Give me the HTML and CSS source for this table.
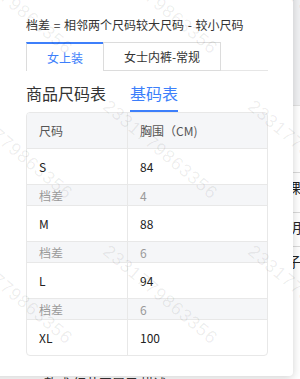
FILE: index.html
```html
<!DOCTYPE html>
<html lang="zh-CN">
<head>
<meta charset="utf-8">
<title>尺码表</title>
<link rel="stylesheet" href="styles.css">
</head>
<body>
<div class="page">
  <div class="page-head"></div>
  <div class="page-gap"></div>
  <div class="page-row"><span class="page-text">课程</span></div>
  <div class="page-row page-row-b"><span class="page-text">明细</span></div>
  <div class="page-row"><span class="page-text">子项</span></div>
  <div class="page-bottom"><span class="page-foot">款式 细节图展示 描述</span></div>
</div>

<div class="popover">
  <div class="note">档差 = 相邻两个尺码较大尺码 - 较小尺码</div>
  <div class="tabs">
    <div class="tab tab-active">女上装</div>
    <div class="tab">女士内裤-常规</div>
    <div class="tab-fill"></div>
  </div>
  <div class="subtabs">
    <div class="subtab">商品尺码表</div>
    <div class="subtab subtab-active">基码表</div>
  </div>
  <div class="size-table">
    <div class="cell head c1">尺码</div>
    <div class="cell head">胸围（CM)</div>

    <div class="cell c1">S</div>
    <div class="cell">84</div>
    <div class="cell diff c1">档差</div>
    <div class="cell diff">4</div>

    <div class="cell c1">M</div>
    <div class="cell">88</div>
    <div class="cell diff c1">档差</div>
    <div class="cell diff">6</div>

    <div class="cell c1">L</div>
    <div class="cell">94</div>
    <div class="cell diff c1">档差</div>
    <div class="cell diff">6</div>

    <div class="cell c1 last">XL</div>
    <div class="cell last">100</div>
  </div>
</div>

<div class="watermarks">
  <span class="wm wm-a1">2331779863356</span>
  <span class="wm wm-a2">2331779863356</span>
  <span class="wm wm-a3">2331779863356</span>
  <span class="wm wm-b1">2331779863356</span>
  <span class="wm wm-b2">2331779863356</span>
  <span class="wm wm-b3">2331779863356</span>
  <span class="wm wm-c1">2331779863356</span>
  <span class="wm wm-c2">2331779863356</span>
  <span class="wm wm-c3">2331779863356</span>
</div>
</body>
</html>
```

FILE: styles.css
```css
html, body {
  margin: 0;
  padding: 0;
}
body {
  width: 300px;
  height: 379px;
  overflow: hidden;
  position: relative;
  background: #ffffff;
  font-family: "Noto Sans CJK SC", "Noto Sans", sans-serif;
  color: #333333;
}

/* background page behind the popover */
.page {
  display: flex;
  flex-direction: column;
  height: 379px;
  overflow: hidden;
}
.page-head {
  height: 105px;
  flex-shrink: 0;
  background: #f0f1f3;
  border-bottom: 1px solid #e2e2e2;
}
.page-gap {
  height: 66px;
  flex-shrink: 0;
}
.page-row {
  height: 27px;
  flex-shrink: 0;
  border-top: 1px solid #d9d9d9;
  display: flex;
  align-items: center;
  padding-left: 287px;
  margin-bottom: 12px;
}
.page-row-b {
  margin-bottom: 6px;
}
.page-text {
  font-size: 14px;
  color: #222222;
  white-space: nowrap;
}
.page-bottom {
  margin-top: auto;
  flex-shrink: 0;
  height: 6px;
  padding-left: 44px;
  overflow: hidden;
}
.page-foot {
  display: block;
  margin-top: 3px;
  font-size: 13px;
  line-height: 14px;
  color: #333333;
  white-space: nowrap;
}

/* popover card */
.popover {
  position: absolute;
  left: -10px;
  top: -10px;
  width: 303px;
  height: 386px;
  box-sizing: border-box;
  padding: 26px 0 0 36px;
  background: #ffffff;
  border-radius: 4px;
  box-shadow: 0 2px 10px rgba(0, 0, 0, 0.18);
}
.note {
  font-size: 12px;
  line-height: 18px;
  color: #333333;
  white-space: nowrap;
  word-spacing: 1px;
}
.tabs {
  margin-top: 8px;
  width: 242px;
  display: flex;
  height: 29px;
}
.tab {
  box-sizing: border-box;
  height: 29px;
  width: 118px;
  border: 1px solid #dcdcdc;
  font-size: 12px;
  display: flex;
  align-items: center;
  justify-content: center;
  color: #333333;
}
.tab-active {
  width: 77px;
  border: none;
  border-top: 2px solid #3d7ffb;
  border-left: 1px solid #dcdcdc;
  color: #3d7ffb;
  padding-bottom: 1px;
}
.tab-fill {
  flex: 1;
  border-bottom: 1px solid #e6e6e6;
}
.subtabs {
  display: flex;
  gap: 24px;
  height: 41px;
}
.subtab {
  box-sizing: border-box;
  height: 41px;
  padding-top: 4px;
  border-bottom: 2px solid transparent;
  display: flex;
  align-items: center;
  font-size: 16px;
  color: #333333;
}
.subtab-active {
  color: #3d7ffb;
  border-bottom-color: #3d7ffb;
}

/* table */
.size-table {
  width: 242px;
  box-sizing: border-box;
  display: grid;
  grid-template-columns: 101px 1fr;
  border: 1px solid #e8e8e8;
  border-radius: 4px;
  overflow: hidden;
}
.cell {
  box-sizing: border-box;
  height: 36px;
  padding-left: 12px;
  display: flex;
  align-items: center;
  font-size: 12px;
  color: #222222;
  border-bottom: 1px solid #e8e8e8;
}
.c1 {
  border-right: 1px solid #e8e8e8;
}
.head {
  background: #f5f6f8;
  color: #555555;
}
.diff {
  height: 21px;
  background: #f5f6f8;
  color: #9a9a9a;
}
.last {
  height: 35px;
  border-bottom: none;
}

/* watermark overlay */
.watermarks {
  position: absolute;
  inset: 0;
  pointer-events: none;
  overflow: hidden;
}
.wm {
  position: absolute;
  font-family: "Liberation Sans", sans-serif;
  font-size: 18px;
  letter-spacing: 1px;
  color: rgba(0, 0, 0, 0.07);
  white-space: nowrap;
  transform: rotate(40deg);
  transform-origin: left top;
}
.wm-a1 { left: -33px; top: -49px; }
.wm-a2 { left: 112px; top: -49px; }
.wm-a3 { left: 257px; top: -49px; }
.wm-b1 { left: -33px; top: 96px; }
.wm-b2 { left: 112px; top: 96px; }
.wm-b3 { left: 257px; top: 96px; }
.wm-c1 { left: -33px; top: 241px; }
.wm-c2 { left: 112px; top: 241px; }
.wm-c3 { left: 257px; top: 241px; }
```
